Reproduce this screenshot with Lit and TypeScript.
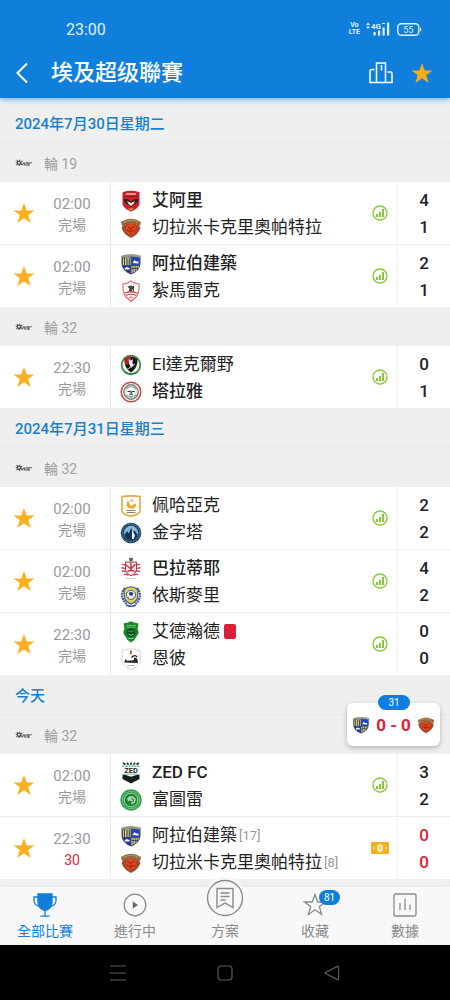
import { LitElement, html, svg, css, nothing } from "lit";
import { customElement, property } from "lit/decorators.js";
import { classMap } from "lit/directives/class-map.js";

interface Team {
  name: string;
  crest: string;
  score: number;
  bold?: boolean;
  red?: boolean;
  rank?: number;
}
interface Match {
  time: string;
  state: string;
  live?: boolean;
  home: Team;
  away: Team;
}
interface Round {
  label: string;
  matches: Match[];
}
interface Day {
  title: string;
  rounds: Round[];
}

const done = "完場";

const days: Day[] = [
  {
    title: "2024年7月30日星期二",
    rounds: [
      {
        label: "輪 19",
        matches: [
          {
            time: "02:00",
            state: done,
            home: { name: "艾阿里", crest: "ahly", score: 4, bold: true },
            away: { name: "切拉米卡克里奧帕特拉", crest: "ceramica", score: 1 },
          },
          {
            time: "02:00",
            state: done,
            home: { name: "阿拉伯建築", crest: "contractors", score: 2, bold: true },
            away: { name: "紮馬雷克", crest: "zamalek", score: 1 },
          },
        ],
      },
      {
        label: "輪 32",
        matches: [
          {
            time: "22:30",
            state: done,
            home: { name: "El達克爾野", crest: "dakhleya", score: 0 },
            away: { name: "塔拉雅", crest: "talaea", score: 1, bold: true },
          },
        ],
      },
    ],
  },
  {
    title: "2024年7月31日星期三",
    rounds: [
      {
        label: "輪 32",
        matches: [
          {
            time: "02:00",
            state: done,
            home: { name: "佩哈亞克", crest: "pharco", score: 2 },
            away: { name: "金字塔", crest: "pyramids", score: 2 },
          },
          {
            time: "02:00",
            state: done,
            home: { name: "巴拉蒂耶", crest: "baladiyat", score: 4, bold: true },
            away: { name: "依斯麥里", crest: "ismaily", score: 2 },
          },
          {
            time: "22:30",
            state: done,
            home: { name: "艾德瀚德", crest: "ittihad", score: 0, red: true },
            away: { name: "恩彼", crest: "enppi", score: 0 },
          },
        ],
      },
    ],
  },
  {
    title: "今天",
    rounds: [
      {
        label: "輪 32",
        matches: [
          {
            time: "02:00",
            state: done,
            home: { name: "ZED FC", crest: "zed", score: 3, bold: true },
            away: { name: "富圖雷", crest: "future", score: 2 },
          },
          {
            time: "22:30",
            state: "30",
            live: true,
            home: { name: "阿拉伯建築", crest: "contractors", score: 0, rank: 17 },
            away: { name: "切拉米卡克里奧帕特拉", crest: "ceramica", score: 0, rank: 8 },
          },
        ],
      },
    ],
  },
];

const crests: Record<string, unknown> = {
  ahly: svg`
    <path d="M2.5 2.2Q11-.6 19.500 2.200V14Q18.500 19 11 21.500Q3.500 19 2.500 14Z" fill="#c8232c"/>
    <path d="M3 6h16v1H3z" fill="#8d1620"/>
    <path d="M6 3.200h10v1.600H6z" fill="#e8b4b0"/>
    <path d="M3.500 9Q8 8 11 11.500Q14 8 18.500 9Q18 13 14 14.500L11 17L8 14.500Q4 13 3.500 9Z" fill="#3b2018"/>
    <path d="M7 11l4 2 4-2-1.500 3L11 16l-2.500-2z" fill="#f3e6da"/>
    <path d="M8 18.500h6l-3 2z" fill="#e9a03a"/>`,
  ceramica: svg`
    <path d="M1 5Q11-1.500 21 5L20 9Q11 4 2 9Z" fill="#8f6a3c"/>
    <path d="M3.500 5.500Q11 1.500 18.500 5.500" fill="none" stroke="#e0b878" stroke-width="1" stroke-dasharray="1.300 .8"/>
    <path d="M3 8.500Q11 4 19 8.500L20.500 11Q18 18 11 21Q4 18 1.500 11Z" fill="#a34a2c"/>
    <circle cx="11" cy="12" r="5.300" fill="#e2431c"/>
    <path d="M8 10l3 1.500L14 9.500M11 11.500l-.5 5M6.500 13l4 1.500 5-1" fill="none" stroke="#8e2411" stroke-width=".9"/>`,
  contractors: svg`
    <path d="M1.500 4Q11 1 20.500 4V11Q20 18 11 21.500Q2 18 1.500 11Z" fill="#3c4a86"/>
    <path d="M1 2.800Q11-.6 21 2.800V5Q11 2 1 5Z" fill="#9a9a8c"/>
    <path d="M3 5.200Q7 4 10.500 4V12H3Z" fill="#f1e45c"/>
    <path d="M4.500 5v7M7 4.700V12M9.200 4.500V12" stroke="#26335f" stroke-width="1.100"/>
    <path d="M11.500 4Q15 4 19 5.200V12H11.500Z" fill="#1d46b8"/>
    <path d="M12.500 10l2-3 1.500 1.500h2.500V10.500z" fill="#fff"/>
    <path d="M3 13H10.500V20Q4 17.500 3 13Z" fill="#2632a4"/>
    <path d="M4.500 15.500l2-1.500 3 1v1.500H5z" fill="#fff"/>
    <path d="M11.500 13H19Q18 17.500 11.500 20Z" fill="#f1e45c"/>
    <path d="M13 13v6M15.200 13v5M17.200 13v3.500M11.500 15.500h6.500" stroke="#26335f" stroke-width=".8"/>`,
  zamalek: svg`
    <path d="M11 1Q14 3.500 19 4Q19.500 13 16 17L11 21.500L6 17Q2.500 13 3 4Q8 3.500 11 1Z" fill="#fff" stroke="#dd6f70" stroke-width="1.200"/>
    <path d="M7.500 6.500l4-1 3 1.500-2 2.500-1 3-3-1.500 1-2z" fill="#4c4547"/>
    <path d="M13.500 6v6" stroke="#333" stroke-width=".9"/>
    <path d="M4.500 13.200Q11 10.500 17.500 13.200M5.800 15.500Q11 13 16.200 15.500" fill="none" stroke="#cc4448" stroke-width="1.200"/>
    <path d="M8.500 17.300h5M11 15v5" stroke="#d9888a" stroke-width=".9"/>`,
  dakhleya: svg`
    <circle cx="11" cy="11" r="9.300" fill="#f5f7f2" stroke="#3d8f4a" stroke-width="1.800"/>
    <path d="M4.500 5Q11 0 17.500 5Q18 14 11 18.500Q4 14 4.500 5Z" fill="#171717"/>
    <path d="M4.500 4.500Q8 2 11 2V9L7 11Q4 9 4.500 4.500Z" fill="#b91f2c"/>
    <path d="M8.500 5l2.500 1.500L13 5l-.6 4 1.400 2-2.800 3-1.600-3.500z" fill="#eee"/>
    <path d="M7 15.500l8-5.500" stroke="#eee" stroke-width=".8"/>
    <path d="M5 18Q11 22 17 18" fill="none" stroke="#2f7c3c" stroke-width="1.600"/>`,
  talaea: svg`
    <circle cx="11" cy="11" r="9.800" fill="#fff" stroke="#c4474d" stroke-width="1.500"/>
    <circle cx="11" cy="11" r="7.200" fill="#e3eae7" stroke="#75827e" stroke-width="1.400"/>
    <path d="M5.500 8Q11 4 16.500 8M6 14Q11 18 16 14" fill="none" stroke="#98a49f" stroke-width="1.300"/>
    <circle cx="11" cy="10.500" r="4.200" fill="#fafafa"/>
    <path d="M7.500 10.500h3l.8 1.500.9-1.500h2.600M9 13.200h4" fill="none" stroke="#334340" stroke-width="1.100"/>`,
  pharco: svg`
    <path d="M2 1.500Q11 .2 20 1.500V16.500Q19 19.500 11 21.300Q3 19.500 2 16.500Z" fill="#fffdf6" stroke="#e0a945" stroke-width="1.600"/>
    <path d="M7.500 5.500Q10 7 9.500 9.500L12 11l2.500-2.500 1.500 1q0 3-3.500 4.200-4.500 0-6-3.500z" fill="#f0a62c"/>
    <circle cx="11.800" cy="5.500" r="1.200" fill="#f2b84b"/>
    <path d="M6.500 15.500h9M6.500 17.500h9" stroke="#8d8468" stroke-width="1.100"/>`,
  pyramids: svg`
    <circle cx="11" cy="11" r="10.300" fill="#1d3f63"/>
    <circle cx="11" cy="11" r="8.800" fill="none" stroke="#7fa5c3" stroke-width=".9" stroke-dasharray="1 .8"/>
    <circle cx="11" cy="11" r="7.200" fill="#8bb8db"/>
    <path d="M4.200 13l3-4 1.500 2.500L11 6l2 4 1.500-1.500 3.300 4.500Q16 18 11 18.200Q6 18 4.200 13Z" fill="#14335b"/>
    <path d="M12 8l3 5.500L13.500 17H12z" fill="#f4f8fb"/>`,
  baladiyat: svg`
    <path d="M9 0h4l-.5 3h-3z" fill="#5b5b58"/>
    <path d="M5.500 4h11v8Q15.500 16 11 17.800Q6.500 16 5.500 12Z" fill="#fbefef" stroke="#8c4146" stroke-width="1"/>
    <path d="M11 4v8M6 7l5 4M15.500 6l-5 5.500M7.500 13.500q3.500-2 7 0" fill="none" stroke="#c93e49" stroke-width="1.600"/>
    <path d="M2 6q1.500 1 3 .8M1.500 9.500q2 1 3.500.6M2 13q2 .6 3.800-.2M20 6q-1.500 1-3 .8M20.500 9.500q-2 1-3.500.6M20 13q-2 .6-3.800-.2M4 16.500q3-1 4.500 1M18 16.500q-3-1-4.500 1" fill="none" stroke="#cf4b55" stroke-width="1.500"/>
    <path d="M5.500 20.500h11" stroke="#dcc6c7" stroke-width="1"/>`,
  ismaily: svg`
    <path d="M5 3Q-1.500 11 6.500 19M17 3Q23.500 11 15.500 19" fill="none" stroke="#3e579f" stroke-width="2.200" stroke-dasharray="2 .7"/>
    <path d="M4 5Q11-1.500 18 5L17.500 13Q16 17 11 19Q6 17 4.500 13Z" fill="#e6d54d" stroke="#3b559f" stroke-width="1.100"/>
    <circle cx="11" cy="9.800" r="4.600" fill="#f3f4ea" stroke="#3e579f" stroke-width="1"/>
    <path d="M9 8l2-1 2 1-.6 2.300H9.800zM8 12.500l1.500-1M14 12.500l-1.500-1" fill="#22356f" stroke="#22356f" stroke-width=".5"/>
    <path d="M6 20q5 2.500 10 0" fill="none" stroke="#3e579f" stroke-width="1.500"/>`,
  ittihad: svg`
    <path d="M8 1.500Q11-.5 14 1.500L18.500 2.500L17.500 8Q20 12 16.500 15.500Q15 19.500 11 21.500Q7 19.500 5.500 15.500Q2 12 4.500 8L3.500 2.500Z" fill="#15862a"/>
    <path d="M6 4.500h10M6.500 6.300h9" stroke="#6fc675" stroke-width=".9"/>
    <circle cx="11" cy="11.500" r="4.300" fill="#0b4b17"/>
    <path d="M8.500 10.500q1-1.500 2 0M11.500 10.500q1-1.500 2 0M8.500 13q2.500 2.500 5 0" fill="none" stroke="#7fd483" stroke-width="1"/>
    <path d="M8 17.500h6" stroke="#7fd483" stroke-width=".9"/>`,
  enppi: svg`
    <path d="M2 2Q6 3 8 1H14Q16 3 20 2V14Q18 19 11 21.500Q4 19 2 14Z" fill="#fff" stroke="#d5d5d5" stroke-width="1"/>
    <path d="M10.500 1.800l1.300 1.500v3h-1.800v-3z" fill="#d04a38"/>
    <path d="M4 14.500l2-4 .8 2.200 7-.5.500-3 3 1.500.7 4.300Z" fill="#26282b"/>
    <path d="M11.500 9.500Q15 6 17 9" fill="none" stroke="#26282b" stroke-width="1.400"/>
    <path d="M7 17.500h8" stroke="#b5b5b5" stroke-width="1"/>`,
  zed: svg`
    <path d="M3 1l2.500 1.500M7 .8l1.500 2M11 .5v2.500M15 .8l-1.500 2M19 1l-2.500 1.500" stroke="#1d2b28" stroke-width="1.600"/>
    <path d="M2.500 4.200h17" stroke="#2f9c7d" stroke-width="1.200" stroke-dasharray="2 1"/>
    <text x="11" y="11.200" font-size="7.500" font-weight="700" text-anchor="middle" fill="#182421">ZED</text>
    <path d="M2.500 12.500l4 .8 4.500 1.500 4.500-1.500 4-.8V17L11 21.500L2.500 17Z" fill="#161f1d"/>
    <path d="M3 12.200h16" stroke="#67bfa5" stroke-width="1"/>`,
  future: svg`
    <circle cx="11" cy="11" r="10.700" fill="#35a14d"/>
    <circle cx="11" cy="11" r="8.700" fill="none" stroke="#9cd9a6" stroke-width=".9" stroke-dasharray="1.300 .9"/>
    <circle cx="11" cy="11" r="6.800" fill="#1d8237" stroke="#b9e4c0" stroke-width=".8"/>
    <path d="M7 9.500l3-2.500 3.500.5 2.500 3-1.500 3.500-3.500 1.500 1-3-2-1-2 .8z" fill="#a9dcb1"/>
    <path d="M11 9.500l2.500 1-.5 2.500" fill="none" stroke="#17692b" stroke-width="1"/>`,
};

const crest = (id: string, size = 22) =>
  html`<svg class="crest" width=${size} height=${size} viewBox="0 0 22 22" aria-hidden="true">${crests[id]}</svg>`;

const starPath =
  "M12 1.500L14.700 9H22.500L16.300 13.600L18.600 21.500L12 16.800L5.400 21.500L7.700 13.600L1.500 9H9.300Z";

const reset = css`
  * {
    box-sizing: border-box;
  }
  svg {
    display: block;
    flex: none;
  }
  button {
    display: grid;
    place-items: center;
    padding: 0;
    border: 0;
    background: none;
    color: inherit;
    font: inherit;
    cursor: pointer;
  }
`;

@customElement("league-header")
class LeagueHeader extends LitElement {
  static styles = [
    reset,
    css`
      :host {
        display: block;
        position: relative;
        z-index: 1;
        background: #107fdb;
        color: #fff;
        box-shadow: 0 2px 5px rgba(16, 127, 219, 0.5);
      }
      .status {
        display: flex;
        align-items: center;
        height: 50px;
        padding: 8px 28px 0 66px;
        color: #dff1ff;
      }
      .clock {
        flex: 1;
        font-size: 16px;
      }
      .volte {
        margin-right: 6px;
        font-size: 7px;
        font-weight: 700;
        line-height: 7px;
        text-align: center;
      }
      .signal {
        margin-right: 7px;
      }
      .bar {
        display: flex;
        align-items: center;
        height: 48px;
        padding: 0 17px 2px 9px;
      }
      .back {
        width: 26px;
        height: 32px;
      }
      h1 {
        flex: 1;
        margin: 0 0 0 16px;
        font-size: 22px;
        line-height: 32px;
        font-weight: 500;
      }
      .actions {
        display: flex;
        gap: 18px;
      }
    `,
  ];

  render() {
    return html`
      <div class="status">
        <span class="clock">23:00</span>
        <span class="volte">Vo<br />LTE</span>
        <svg class="signal" width="24" height="14" viewBox="0 0 24 14" fill="currentColor">
          <path d="M0 3L2 .5 4 3ZM0 4.500h4L2 7Z" />
          <text x="5" y="7" font-size="8" font-weight="700">4G</text>
          <path d="M16 1h3v1h-3z" />
          <path d="M7.500 10h2.200v3.500H7.500zM12 8.500h2.200v5H12zM16.500 5.500h2.200v8h-2.200zM21 .5h2.200v13H21z" />
        </svg>
        <svg width="25" height="13" viewBox="0 0 25 13">
          <rect x=".8" y=".8" width="21" height="11.400" rx="3.500" fill="none" stroke="currentColor" stroke-width="1.400" />
          <path d="M23 4.500q1.500.4 1.500 2t-1.500 2z" fill="currentColor" />
          <text x="11.300" y="9.800" font-size="9" text-anchor="middle" fill="currentColor">55</text>
        </svg>
      </div>
      <div class="bar">
        <button class="back" aria-label="返回">
          <svg width="14" height="22" viewBox="0 0 14 22" fill="none" stroke="currentColor" stroke-width="2">
            <path d="M12 1.500L2.500 11L12 20.500" />
          </svg>
        </button>
        <h1>埃及超级聯賽</h1>
        <div class="actions">
          <button aria-label="積分榜">
            <svg width="24" height="24" viewBox="0 0 24 24" fill="none" stroke="currentColor" stroke-width="1.500">
              <path d="M7.500 21.500V2h9v19.500M5.500 8.500H3.500Q1 8.500 1 10V21.500h22V13Q23 11 21.500 11h-3M11.500 5.500l1-.5v4.500" />
            </svg>
          </button>
          <button aria-label="收藏聯賽">
            <svg width="22" height="22" viewBox="1 1 22 21"><path d=${starPath} fill="#fbab18" /></svg>
          </button>
        </div>
      </div>
    `;
  }
}

@customElement("match-row")
class MatchRow extends LitElement {
  @property({ attribute: false }) match!: Match;

  static styles = [
    reset,
    css`
      :host {
        display: block;
        background: #fff;
      }
      .row {
        display: grid;
        grid-template-columns: 48px 48px 14px 1fr 34px 53px;
        height: 62px;
      }
      .when {
        display: flex;
        flex-direction: column;
        align-items: center;
        padding-top: 12px;
        color: #999;
        font-size: 15px;
        line-height: 21px;
      }
      .state {
        font-size: 14px;
      }
      .live {
        color: #d9233c;
      }
      .teams {
        grid-column: 4;
        min-width: 0;
        padding: 5px 0 0 9px;
        border-left: 1px solid #ececec;
      }
      .team {
        display: flex;
        align-items: center;
        height: 27px;
        font-size: 17px;
        line-height: 27px;
        color: #222;
        white-space: nowrap;
      }
      .crest {
        margin-right: 10px;
      }
      .bold {
        font-weight: 500;
      }
      .card {
        width: 12px;
        height: 15px;
        margin-left: 4px;
        border-radius: 2px;
        background: #dc1f35;
      }
      .rank {
        margin-left: 2px;
        font-size: 13px;
        color: #999;
      }
      .scores {
        padding-top: 5px;
        border-left: 1px solid #f3f3f3;
        color: #222;
        font-size: 17px;
        font-weight: 500;
        line-height: 27px;
        text-align: center;
      }
      .scores.live {
        color: #d9233c;
      }
    `,
  ];

  private team(t: Team) {
    return html`
      <div class="team">
        ${crest(t.crest)}
        <span class=${classMap({ bold: !!t.bold })}>${t.name}</span>
        ${t.red ? html`<span class="card" role="img" aria-label="紅牌"></span>` : nothing}
        ${t.rank ? html`<span class="rank">[${t.rank}]</span>` : nothing}
      </div>
    `;
  }

  render() {
    const m = this.match;
    return html`
      <article class="row">
        <button aria-label="收藏">
          <svg width="22" height="22" viewBox="1 1 22 21"><path d=${starPath} fill="#fdb01f" /></svg>
        </button>
        <div class="when">
          <span>${m.time}</span>
          <span class=${classMap({ state: true, live: !!m.live })}>${m.state}</span>
        </div>
        <div class="teams">${this.team(m.home)}${this.team(m.away)}</div>
        <button aria-label=${m.live ? "現場" : "統計"}>
          ${m.live
            ? html`<svg width="18" height="12" viewBox="0 0 18 12">
                <rect width="18" height="12" rx="1" fill="#f2b11f" />
                <ellipse cx="9" cy="6" rx="2.300" ry="3" fill="none" stroke="#fff" stroke-width="1.200" />
                <path d="M9 1.500v9" stroke="#fff" stroke-width=".8" />
                <path d="M2 4.500v3l1.500-1.500zM16 4.500v3L14.500 6z" fill="#fff" />
              </svg>`
            : html`<svg width="16" height="16" viewBox="0 0 16 16">
                <circle cx="8" cy="8" r="7" fill="#fafff2" stroke="#8cc63f" stroke-width="1.300" />
                <path d="M4 9h2v3H4zM7 7h2v5H7zM10 4h2v8h-2z" fill="#8cc63f" />
              </svg>`}
        </button>
        <div class=${classMap({ scores: true, live: !!m.live })}>
          <div>${m.home.score}</div>
          <div>${m.away.score}</div>
        </div>
      </article>
    `;
  }
}

@customElement("tab-bar")
class TabBar extends LitElement {
  static styles = [
    reset,
    css`
      :host {
        display: block;
        background: #f8f8f8;
        box-shadow: 0 -1px 3px rgba(0, 0, 0, 0.03);
      }
      nav {
        display: grid;
        grid-template-columns: repeat(5, 1fr);
        height: 58px;
      }
      a {
        display: flex;
        flex-direction: column;
        align-items: center;
        justify-content: flex-end;
        padding-bottom: 3px;
        color: #8a8a8a;
        font-size: 14px;
        line-height: 22px;
        text-decoration: none;
      }
      a.active {
        color: #107fdb;
      }
      .icon {
        position: relative;
        display: grid;
        place-items: center;
        width: 24px;
        height: 30px;
      }
      .raised {
        width: 42px;
        height: 42px;
        margin: -20px 0 1px;
        border-radius: 50%;
        background: #f8f8f8;
      }
      .badge {
        position: absolute;
        left: 16px;
        top: 0;
        width: 21px;
        border-radius: 8px;
        background: #107fdb;
        color: #fff;
        font-size: 10px;
        line-height: 15px;
        text-align: center;
      }
    `,
  ];

  render() {
    return html`
      <nav>
        <a class="active" href="#matches">
          <span class="icon">
            <svg width="24" height="24" viewBox="0 0 24 24" fill="none" stroke="currentColor" stroke-width="1.300">
              <path d="M5 1h14v8.500Q18.500 16 12 17.500Q5.500 16 5 9.500Z" fill="currentColor" />
              <path d="M5 4H1v4q.5 4.500 5 5M19 4h4v4q-.5 4.500-5 5M12 17v6M7.500 23.200h9" />
            </svg>
          </span>
          全部比賽
        </a>
        <a href="#live">
          <span class="icon">
            <svg width="24" height="24" viewBox="0 0 24 24" fill="none" stroke="currentColor" stroke-width="1.300">
              <circle cx="12" cy="12" r="10.800" />
              <path d="M9.800 8.500v7l5.200-3.500z" fill="#666" stroke="none" />
            </svg>
          </span>
          進行中
        </a>
        <a href="#tips">
          <span class="icon raised">
            <svg width="38" height="38" viewBox="0 0 38 38" fill="none" stroke="currentColor" stroke-width="1.400">
              <circle cx="19" cy="19" r="17.500" />
              <path d="M11 9.500h16v19l-8-4.500-8 4.500zM14.500 14h9M14.500 17.500h9M14.500 21h5" />
            </svg>
          </span>
          方案
        </a>
        <a href="#favourites">
          <span class="icon">
            <svg width="24" height="24" viewBox="0 0 24 24" fill="none" stroke="currentColor" stroke-width="1.300">
              <path d=${starPath} />
            </svg>
            <span class="badge">81</span>
          </span>
          收藏
        </a>
        <a href="#data">
          <span class="icon">
            <svg width="24" height="24" viewBox="0 0 24 24" fill="none" stroke="currentColor" stroke-width="1.300">
              <rect x="1" y="1" width="22" height="22" rx="1.500" />
              <path d="M7 10v7M12 5.500V17M17 11.500V17" />
            </svg>
          </span>
          數據
        </a>
      </nav>
    `;
  }
}

@customElement("system-bar")
class SystemBar extends LitElement {
  static styles = [
    reset,
    css`
      :host {
        display: grid;
        grid-template-columns: repeat(3, 1fr);
        height: 55px;
        padding: 0 64px;
        background: #000;
        color: #5c5c5c;
      }
    `,
  ];

  render() {
    return html`
      <button aria-label="選單">
        <svg width="16" height="16" viewBox="0 0 16 16" stroke="currentColor" stroke-width="1.200">
          <path d="M0 1h16M0 8h16M0 15h16" />
        </svg>
      </button>
      <button aria-label="主畫面">
        <svg width="16" height="16" viewBox="0 0 16 16" fill="none" stroke="currentColor" stroke-width="1.200">
          <rect x="1" y="1" width="14" height="14" rx="3" />
        </svg>
      </button>
      <button aria-label="上一頁">
        <svg width="16" height="16" viewBox="0 0 16 16" fill="none" stroke="currentColor" stroke-width="1.200">
          <path d="M14.500 2v12q0 1-1 .6L1.500 8.600q-.8-.6 0-1.200L13.500 1.400q1-.4 1 .6z" />
        </svg>
      </button>
    `;
  }
}

@customElement("app-root")
class AppRoot extends LitElement {
  static styles = [
    reset,
    css`
      :host {
        display: flex;
        flex-direction: column;
        min-height: 100vh;
        background: #efefef;
        color: #222;
        font-family: Roboto, "Noto Sans CJK TC", sans-serif;
      }
      main {
        position: relative;
        flex: 1;
        padding: 5px 0 8px;
      }
      h2 {
        height: 40px;
        margin: 0;
        padding: 0 15px;
        border-bottom: 1px solid #e9e9e9;
        color: #1a7fcb;
        font-size: 15px;
        font-weight: 500;
        line-height: 43px;
      }
      h3 {
        display: flex;
        align-items: center;
        gap: 12px;
        height: 39px;
        margin: 0;
        padding: 0 15px;
        color: #a0a0a0;
        font-size: 14px;
        font-weight: 400;
      }
      match-row + match-row {
        border-top: 1px solid #eee;
      }
      .live {
        position: absolute;
        right: 10px;
        bottom: 141px;
        display: flex;
        align-items: center;
        justify-content: space-between;
        width: 93px;
        height: 43px;
        padding: 0 5px;
        border-radius: 6px;
        background: #fff;
        box-shadow: 0 2px 5px rgba(0, 0, 0, 0.25);
        color: #d9233c;
        font-size: 17px;
        font-weight: 700;
        text-decoration: none;
      }
      .minute {
        position: absolute;
        left: 31px;
        top: -8px;
        width: 32px;
        border-radius: 8px;
        background: #107fdb;
        color: #fff;
        font-size: 10px;
        font-weight: 400;
        line-height: 15px;
        text-align: center;
      }
    `,
  ];

  private leagueLogo() {
    return html`<svg width="17" height="10" viewBox="0 0 17 10" fill="#4a4a4a" aria-hidden="true">
      <path d="M0 3.500l2 .5L1.500 1.500 3.500 3 5 1.200 5.400 3.400 8 2.500 6.200 4.800 8 7.200 5.300 6.400 4.200 8.500 3.200 6.400 1 7.400 2 5.200Z" />
      <circle cx="4" cy="4.800" r="1" fill="#efefef" />
      <path d="M7.500 7.500q.5-3 2-2.500v2.500M11 8V5q1-.7 2 0V8M14 8V4.800h3" fill="none" stroke="#6a6a6a" stroke-width="1.100" />
    </svg>`;
  }

  render() {
    return html`
      <league-header></league-header>
      <main>
        ${days.map(
          (day) => html`
            <section>
              <h2>${day.title}</h2>
              ${day.rounds.map(
                (round) => html`
                  <h3>${this.leagueLogo()}<span>${round.label}</span></h3>
                  ${round.matches.map((m) => html`<match-row .match=${m}></match-row>`)}
                `
              )}
            </section>
          `
        )}
        <a class="live" href="#live-match">
          <span class="minute">31</span>
          ${crest("contractors", 18)}
          <span>0 - 0</span>
          ${crest("ceramica", 18)}
        </a>
      </main>
      <tab-bar></tab-bar>
      <system-bar></system-bar>
    `;
  }
}
